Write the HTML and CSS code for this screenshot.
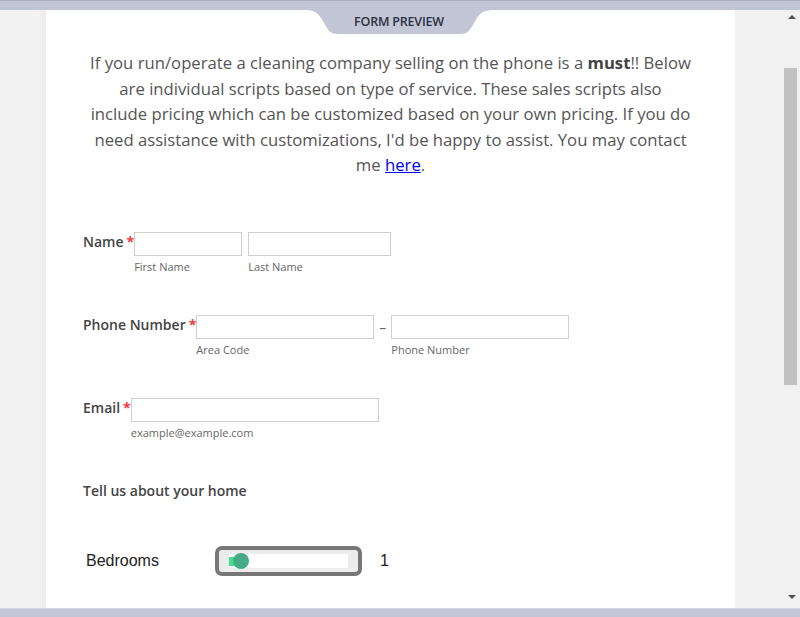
FILE: index.html
```html
<!DOCTYPE html>
<html>
<head>
<meta charset="utf-8">
<link rel="stylesheet" href="styles.css">
</head>
<body>
<div class="topbar"></div>
<div class="middle">
  <div class="gutter-left"></div>
  <div class="panel">
    <p class="intro">If you run/operate a cleaning company selling on the phone is a <b>must</b>!! Below<br>are individual scripts based on type of service. These sales scripts also<br>include pricing which can be customized based on your own pricing. If you do<br>need assistance with customizations, I'd be happy to assist. You may contact<br>me <a href="#">here</a>.</p>

    <div class="row row-name">
      <div class="label">Name<span class="req">*</span></div>
      <div class="field">
        <div class="box w-first"></div>
        <div class="sub">First Name</div>
      </div>
      <div class="field">
        <div class="box w-last"></div>
        <div class="sub">Last Name</div>
      </div>
    </div>

    <div class="row">
      <div class="label">Phone Number<span class="req">*</span></div>
      <div class="field field-tight">
        <div class="box w-phone"></div>
        <div class="sub">Area Code</div>
      </div>
      <div class="dash">–</div>
      <div class="field">
        <div class="box w-phone"></div>
        <div class="sub">Phone Number</div>
      </div>
    </div>

    <div class="row">
      <div class="label">Email<span class="req">*</span></div>
      <div class="field">
        <div class="box w-email"></div>
        <div class="sub sub-email">example@example.com</div>
      </div>
    </div>

    <div class="heading">Tell us about your home</div>

    <div class="slider-row">
      <div class="slider-label">Bedrooms</div>
      <div class="slider">
        <div class="track">
          <div class="fill"></div>
          <div class="thumb"></div>
        </div>
      </div>
      <div class="slider-value">1</div>
    </div>
  </div>
  <div class="gutter-right"></div>
  <div class="scrollbar">
    <div class="arrow-up"></div>
    <div class="thumb-bar"></div>
    <div class="arrow-down"></div>
  </div>
</div>
<div class="bottombar"></div>

<div class="tab">
  <svg width="190" height="24" viewBox="0 0 190 24">
    <path d="M0,0 C9,0 13,2 17,8 L23,18 C26,23 29,24 36,24 L154,24 C161,24 164,23 167,18 L173,8 C177,2 181,0 190,0 Z" fill="#c2c6d4"/>
  </svg>
  <span class="tab-text">FORM PREVIEW</span>
</div>
</body>
</html>
```

FILE: styles.css
```css
html, body {
  margin: 0;
  padding: 0;
  width: 800px;
  height: 617px;
  overflow: hidden;
  background: #f1f1f1;
}

.topbar {
  height: 9px;
  background: #c2c6d4;
  border-top: 1px solid #acb0be;
}

.bottombar {
  height: 8px;
  background: #c2c6d4;
  border-top: 1px solid #d6d9e2;
}

.middle {
  display: flex;
  height: 598px;
}

.gutter-left {
  width: 46px;
  background: linear-gradient(to right, #f2f2f2 0, #f2f2f2 38px, #ececec 46px);
}

.panel {
  width: 689px;
  background: #fff;
  overflow: hidden;
  font-family: "Open Sans", sans-serif;
  color: #555;
}

.gutter-right {
  width: 48px;
  background: #f2f2f2;
}

.scrollbar {
  width: 17px;
  background: #f1f1f1;
  position: relative;
}

.thumb-bar {
  position: absolute;
  left: 1px;
  top: 58px;
  width: 13px;
  height: 317px;
  background: #c1c1c1;
}

.arrow-up, .arrow-down {
  position: absolute;
  left: 5px;
  width: 0;
  height: 0;
  border-left: 4px solid transparent;
  border-right: 4px solid transparent;
}

.arrow-up {
  top: 5px;
  border-bottom: 4px solid #505050;
}

.arrow-down {
  top: 585px;
  border-top: 4px solid #505050;
}

.intro {
  margin: 40px 20px 0 20px;
  text-align: center;
  font-size: 16.7px;
  line-height: 25.5px;
  color: #555;
  white-space: nowrap;
}

.intro b {
  font-weight: 700;
  color: #444;
}

.intro a {
  color: #0000ee;
  text-decoration: underline;
}

.row {
  display: flex;
  align-items: flex-start;
  height: 83px;
  padding-left: 37px;
}

.row-name {
  margin-top: 54px;
}

.label {
  font-size: 14px;
  font-weight: 600;
  color: #444;
  line-height: 20px;
  white-space: nowrap;
}

.req {
  color: #f23a3c;
  font-weight: 700;
  margin-left: 3px;
  margin-right: 0;
}

.field {
  display: flex;
  flex-direction: column;
  margin-right: 6px;
}

.field-tight {
  margin-right: 0;
}

.box {
  border: 1px solid #cfcfcf;
  background: #fff;
  box-sizing: border-box;
  height: 24px;
}

.w-first { width: 108px; }
.w-last { width: 143px; }
.w-phone { width: 178px; }
.w-email { width: 248px; }

.sub {
  font-size: 11px;
  color: #666;
  line-height: 14px;
  margin-top: 4px;
}

.dash {
  font-size: 14px;
  color: #666;
  line-height: 24px;
  margin: 1px 5px 0 5px;
}

.heading {
  padding-left: 37px;
  font-size: 14px;
  font-weight: 600;
  color: #444;
  line-height: 20px;
}

.slider-row {
  display: flex;
  align-items: center;
  margin-top: 45px;
  padding-left: 40px;
  font-family: "Liberation Sans", Arial, sans-serif;
  font-size: 16px;
  color: #222;
}

.slider-label {
  width: 129px;
}

.slider {
  width: 147px;
  height: 30px;
  box-sizing: border-box;
  border: 4px solid #777;
  border-radius: 7px;
  background: #ececec;
  padding: 4px 10px 0 10px;
}

.track {
  position: relative;
  height: 14px;
  background: #fff;
}

.fill {
  position: absolute;
  left: 0;
  top: 3px;
  width: 8px;
  height: 9px;
  background: #3fe08f;
}

.thumb {
  position: absolute;
  left: 4px;
  top: -1px;
  width: 16px;
  height: 16px;
  border-radius: 50%;
  background: #45ab87;
}

.slider-value {
  margin-left: 18px;
}

.tab {
  position: absolute;
  left: 304px;
  top: 10px;
  width: 190px;
  height: 24px;
}

.tab svg {
  display: block;
}

.tab-text {
  position: absolute;
  left: 0;
  right: 0;
  top: 3px;
  text-align: center;
  font-family: "Open Sans", sans-serif;
  font-size: 12.5px;
  font-weight: 600;
  color: #2a3043;
  letter-spacing: -0.2px;
}
```
